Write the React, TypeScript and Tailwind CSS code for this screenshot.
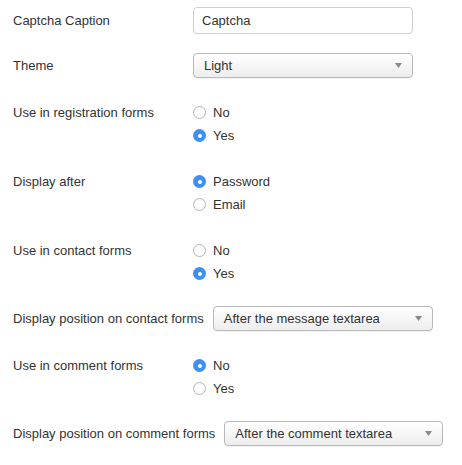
import React from 'react'

const font = { fontFamily: '"Liberation Sans", Arial, Helvetica, sans-serif' }

function Label({ children, wide = false }: { children: React.ReactNode; wide?: boolean }) {
  return (
    <div className={`${wide ? 'pr-[9px]' : 'w-[180px]'} shrink-0 text-[13px] leading-[23px] text-[#333]`}>
      {children}
    </div>
  )
}

function Select({ value, width = 'w-[220px]' }: { value: string; width?: string }) {
  return (
    <div
      className={`${width} h-[25px] flex items-center justify-between pl-[10px] pr-[10px] rounded-[4px] border border-[#b9b9b9] bg-gradient-to-b from-white to-[#ededed] text-[13px] text-[#333] shadow-[0_1px_1px_rgba(0,0,0,0.05)]`}
    >
      <span>{value}</span>
      <svg width="7" height="5" viewBox="0 0 7 5">
        <path d="M0 0 L7 0 L3.5 5 Z" fill="#8a8a8a" />
      </svg>
    </div>
  )
}

function Radio({ checked, label }: { checked: boolean; label: string }) {
  return (
    <div className="flex items-center h-[23px] gap-[7px] text-[13px] text-[#333]">
      {checked ? (
        <span className="w-[13px] h-[13px] rounded-full bg-[#3d8ff5] flex items-center justify-center">
          <span className="w-[4px] h-[4px] rounded-full bg-white" />
        </span>
      ) : (
        <span className="w-[13px] h-[13px] rounded-full border border-[#b4b4b4] bg-white" />
      )}
      <span>{label}</span>
    </div>
  )
}

function RadioRow({ label, options, mt }: { label: string; options: [string, boolean][]; mt: string }) {
  return (
    <div className={`flex items-start ${mt}`}>
      <Label>{label}</Label>
      <div className="flex flex-col">
        {options.map(([o, c]) => (
          <Radio key={o} label={o} checked={c} />
        ))}
      </div>
    </div>
  )
}

export default function App() {
  return (
    <div className="w-[462px] h-[465px] bg-white pl-[13px] pt-[7px]" style={font}>
      <div className="flex items-center">
        <Label>Captcha Caption</Label>
        <div className="w-[220px] h-[27px] flex items-center pl-[8px] rounded-[4px] border border-[#cfcfcf] bg-white text-[13px] text-[#333]">
          Captcha
        </div>
      </div>

      <div className="flex items-center mt-[19px]">
        <Label>Theme</Label>
        <Select value="Light" />
      </div>

      <RadioRow mt="mt-[23px]" label="Use in registration forms" options={[['No', false], ['Yes', true]]} />
      <RadioRow mt="mt-[23px]" label="Display after" options={[['Password', true], ['Email', false]]} />
      <RadioRow mt="mt-[23px]" label="Use in contact forms" options={[['No', false], ['Yes', true]]} />

      <div className="flex items-center mt-[21px]">
        <Label wide>Display position on contact forms</Label>
        <Select value="After the message textarea" />
      </div>

      <RadioRow mt="mt-[23px]" label="Use in comment forms" options={[['No', true], ['Yes', false]]} />

      <div className="flex items-center mt-[21px]">
        <Label wide>Display position on comment forms</Label>
        <Select value="After the comment textarea" width="w-[219px]" />
      </div>
    </div>
  )
}
